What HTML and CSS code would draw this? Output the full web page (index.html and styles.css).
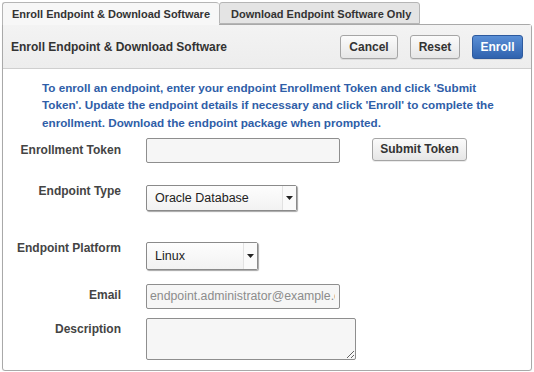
FILE: index.html
```html
<!DOCTYPE html>
<html>
<head>
<meta charset="utf-8">
<link rel="stylesheet" href="styles.css">
</head>
<body>
<div class="page">
  <div class="tabs">
    <div class="tab tab-active">Enroll Endpoint &amp; Download Software</div>
    <div class="tab">Download Endpoint Software Only</div>
  </div>
  <div class="panel">
    <div class="panel-header">
      <div class="panel-title">Enroll Endpoint &amp; Download Software</div>
      <div class="actions">
        <button class="btn btn-cancel">Cancel</button>
        <button class="btn btn-reset">Reset</button>
        <button class="btn btn-primary">Enroll</button>
      </div>
    </div>
    <div class="panel-body">
      <p class="intro">To enroll an endpoint, enter your endpoint Enrollment Token and click 'Submit Token'. Update the endpoint details if necessary and click 'Enroll' to complete the enrollment. Download the endpoint package when prompted.</p>
      <div class="row row-token">
        <label class="lbl">Enrollment Token</label>
        <input class="field field-token" type="text">
        <button class="btn btn-submit">Submit Token</button>
      </div>
      <div class="row row-type">
        <label class="lbl">Endpoint Type</label>
        <div class="select select-type">
          <span class="select-text">Oracle Database</span>
          <span class="select-arrow"><svg width="7" height="4" viewBox="0 0 7 4"><path d="M0 0h7L3.5 4z" fill="#222"/></svg></span>
        </div>
      </div>
      <div class="row row-platform">
        <label class="lbl">Endpoint Platform</label>
        <div class="select select-platform">
          <span class="select-text">Linux</span>
          <span class="select-arrow"><svg width="7" height="4" viewBox="0 0 7 4"><path d="M0 0h7L3.5 4z" fill="#222"/></svg></span>
        </div>
      </div>
      <div class="row row-email">
        <label class="lbl">Email</label>
        <input class="field field-email" type="text" placeholder="endpoint.administrator@example.com">
      </div>
      <div class="row row-desc">
        <label class="lbl">Description</label>
        <textarea class="field field-desc"></textarea>
      </div>
    </div>
  </div>
</div>
</body>
</html>
```
FILE: styles.css
```css
* { box-sizing: border-box; }
html, body { margin: 0; padding: 0; background: #fff; }
body { font-family: "Liberation Sans", Arial, sans-serif; color: #333; }
.page { padding: 2px 2px 0 2px; width: 534px; }

.tabs { display: flex; height: 22px; }
.tab {
  height: 23px;
  border: 1px solid #b5b5b5;
  border-bottom: none;
  border-radius: 3px 3px 0 0;
  font-size: 11px;
  font-weight: bold;
  color: #333;
  white-space: nowrap;
  padding: 5px 0 0 9px;
  background: #e4e4e4;
  position: relative;
  z-index: 1;
}
.tab-active { width: 217px; background: #f7f7f7; border-right: none; z-index: 2; }
.tab + .tab { width: 201px; padding-left: 11px; border-bottom: 1px solid #b5b5b5; height: 22px; }

.panel {
  width: 530px;
  height: 347px;
  border: 1px solid #a9a9a9;
  border-radius: 0 3px 3px 3px;
  background: #fff;
  box-shadow: 0 1px 1px rgba(0,0,0,0.08);
}
.panel-header {
  height: 44px;
  background: linear-gradient(#f3f3f3, #ededed);
  border-bottom: 1px solid #cfcfcf;
  display: flex;
  align-items: center;
  justify-content: space-between;
  padding: 0 8px 0 8px;
}
.panel-title { font-size: 12px; font-weight: bold; color: #333; margin-top: 1px; }
.actions { display: flex; gap: 12px; margin-top: 1px; }

.btn {
  font-family: "Liberation Sans", Arial, sans-serif;
  font-size: 12px;
  font-weight: bold;
  color: #333;
  height: 24px;
  border: 1px solid #a5a5a5;
  border-radius: 3px;
  background: linear-gradient(#fbfbfb, #e6e6e6);
  padding: 0;
  box-shadow: 0 1px 0 rgba(0,0,0,0.08);
}
.btn-cancel { width: 58px; }
.btn-reset { width: 50px; }
.btn-primary {
  width: 51px;
  color: #fff;
  border-color: #2d5a9e;
  background: linear-gradient(#5a8fd6, #2f62ae);
}

.panel-body { padding: 0; }
.intro {
  margin: 10px 0 0 39px;
  width: 462px;
  font-size: 11.7px;
  font-weight: bold;
  line-height: 17.3px;
  color: #2f5ea8;
}

.row { display: flex; align-items: flex-start; }
.lbl {
  width: 118px;
  flex: none;
  text-align: right;
  font-size: 12px;
  font-weight: bold;
  color: #444;
  margin-right: 25px;
}
.row-token { margin-top: 7px; }
.row-token .lbl { padding-top: 5px; }
.row-type { margin-top: 22px; }
.row-type .lbl { margin-top: -1px; }
.row-platform { margin-top: 31px; }
.row-platform .lbl { margin-top: -1px; }
.row-email { margin-top: 14px; }
.row-email .lbl { padding-top: 4px; }
.row-desc { margin-top: 9px; }
.row-desc .lbl { padding-top: 4px; }

.field {
  font-family: "Liberation Sans", Arial, sans-serif;
  font-size: 12px;
  border: 1px solid #8e8e8e;
  border-radius: 2px;
  background: #f6f6f6;
  color: #333;
  padding: 0 4px;
  outline: none;
  margin: 0;
}
.field-token { width: 194px; height: 25px; }
.btn-submit { width: 95px; height: 23px; margin-left: 32px; }
.field-email { width: 194px; height: 25px; font-size: 12.3px; padding-left: 3px; }
.field-email::placeholder { color: #8c8c8c; }
.field-desc { width: 210px; height: 42px; resize: both; display: block; }

.select {
  display: flex;
  align-items: center;
  height: 26px;
  border: 1px solid #8a8a8a;
  border-radius: 2px;
  background: linear-gradient(#fdfdfd, #f2f2f2);
  box-shadow: 1px 1px 1px rgba(0,0,0,0.35);
  font-size: 12.5px;
  color: #222;
}
.select-text { flex: 1; padding-left: 8px; }
.select-arrow {
  width: 14px;
  height: 100%;
  display: flex;
  align-items: center;
  justify-content: center;
  border-left: 1px solid #e2e2e2;
  background: #fafafa;
}
.select-type { width: 151px; }
.select-platform { width: 112px; height: 28px; }
```
